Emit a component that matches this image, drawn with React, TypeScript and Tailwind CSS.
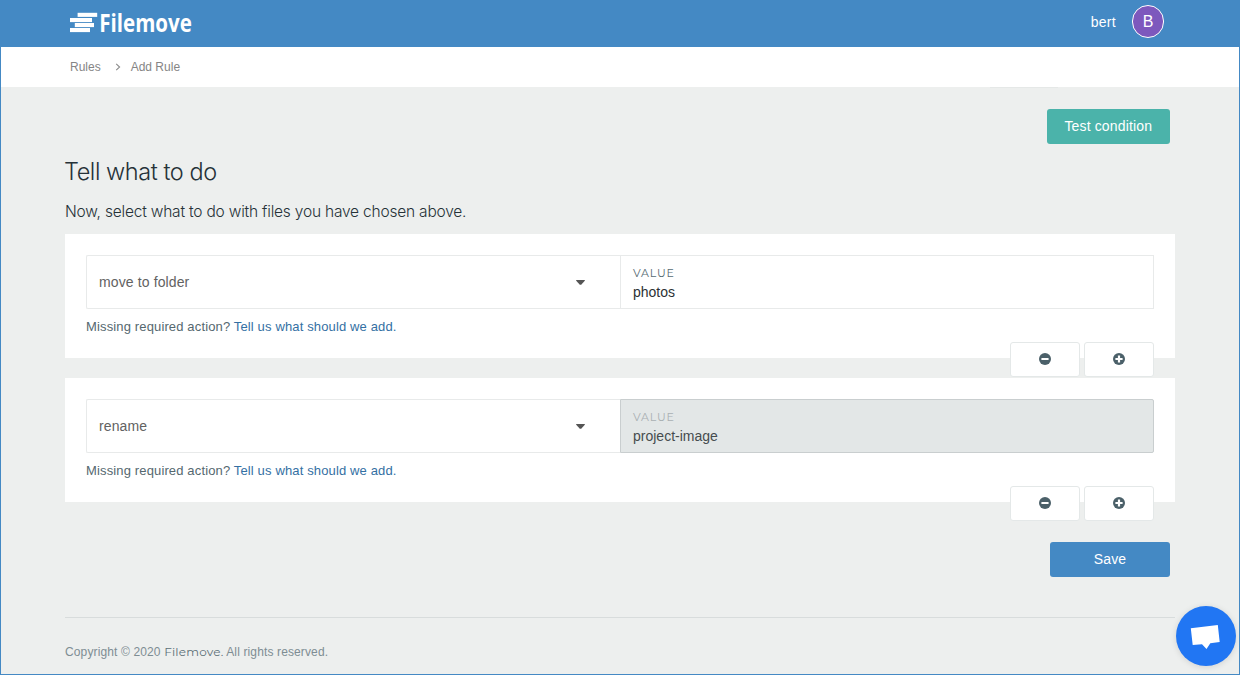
import React from 'react';

function Logo() {
  return (
    <svg width="140" height="47" viewBox="0 -10 140 47" className="block overflow-visible" fill="#fff" aria-label="Filemove">
      <rect x="7.6" y="2.8" width="19.6" height="4.1" />
      <rect x="0" y="8" width="22" height="4.1" />
      <rect x="4.8" y="13" width="19.2" height="4.1" />
      <rect x="0" y="18" width="20" height="4.1" />
      <text
        x="29.3"
        y="22"
        fontFamily="'Open Sans', sans-serif"
        fontWeight="700"
        fontSize="25"
        textLength="92.5"
        lengthAdjust="spacingAndGlyphs"
      >
        Filemove
      </text>
    </svg>
  );
}

function MinusCircle() {
  return (
    <svg width="12" height="12" viewBox="0 0 12 12">
      <circle cx="6" cy="6" r="6" fill="#4b6069" />
      <rect x="2.4" y="4.9" width="7.2" height="2.2" rx="0.3" fill="#fff" />
    </svg>
  );
}

function PlusCircle() {
  return (
    <svg width="12" height="12" viewBox="0 0 12 12">
      <circle cx="6" cy="6" r="6" fill="#4b6069" />
      <path d="M4.9 2.4h2.2v2.5h2.5v2.2H7.1v2.5H4.9V7.1H2.4V4.9h2.5z" fill="#fff" />
    </svg>
  );
}

function ActionButton({ children, label }: { children: React.ReactNode; label: string }) {
  return (
    <button
      aria-label={label}
      className="flex h-[35px] w-[70px] items-center justify-center rounded-[3px] border border-[#e4e8e8] bg-white pb-[2px]"
    >
      {children}
    </button>
  );
}

function RuleCard({ action, value, disabled = false }: { action: string; value: string; disabled?: boolean }) {
  return (
    <section className="relative h-[124px] bg-white px-[21px] pt-[21px]">
      <div className="flex h-[54px]">
        <div className="flex w-[534px] items-center justify-between rounded-l-[2px] border border-r-0 border-[#e8eaea] pl-3 pr-[35px]">
          <span className="text-[14px] tracking-[0.12px] text-[#626262]">{action}</span>
          <svg width="9" height="5" viewBox="0 0 9 5">
            <path d="M0.2 0h8.6v0.8L5.2 4.8H3.8L0.2 0.8z" fill="#555" />
          </svg>
        </div>
        <div
          className={
            disabled
              ? 'flex-1 rounded-r-[2px] border border-[#c9cecf] bg-[#e3e7e7] pl-3 pt-[9px]'
              : 'flex-1 border border-[#e8eaea] bg-white pl-3 pt-[9px]'
          }
        >
          <div
            className={
              disabled
                ? "font-['Montserrat','Inter',sans-serif] text-[11px] leading-4 tracking-[0.8px] text-[#a9b0b3]"
                : "font-['Montserrat','Inter',sans-serif] text-[11px] leading-4 tracking-[0.8px] text-[#566b73]"
            }
          >
            VALUE
          </div>
          <div className={disabled ? 'text-[14px] leading-[22px] text-[#464c4e]' : 'text-[14px] leading-[22px] text-[#2b3134]'}>
            {value}
          </div>
        </div>
      </div>
      <p className="mt-[9px] text-[13px] leading-[18px] tracking-[0.14px] text-[#55686f]">
        Missing required action?{' '}
        <a href="#" className="text-[#3470a3]">
          Tell us what should we add.
        </a>
      </p>
      <div className="absolute right-[21px] top-[108px] z-10 flex gap-1">
        <ActionButton label="Remove action">
          <MinusCircle />
        </ActionButton>
        <ActionButton label="Add action">
          <PlusCircle />
        </ActionButton>
      </div>
    </section>
  );
}

export default function App() {
  return (
    <div className="relative flex h-[675px] w-[1240px] flex-col overflow-hidden border border-t-0 border-[#4489c4] bg-[#edefee] font-['Liberation_Sans',Arial,sans-serif]">
      <header className="flex h-[47px] shrink-0 items-start justify-between bg-[#4489c4] pl-[69px] pr-[75px]">
        <Logo />
        <div className="flex items-center gap-4 pt-[5px] text-white">
          <span className="pt-[2px] text-[14px] tracking-[0.3px]">bert</span>
          <span className="flex h-[33px] w-8 items-center justify-center rounded-full border border-white bg-[#7d58bd] pt-px text-[16px]">
            B
          </span>
        </div>
      </header>
      <nav className="flex h-10 shrink-0 items-center bg-white pl-[69px] text-[12px] text-[#858585]">
        <span>Rules</span>
        <svg width="6" height="8" viewBox="0 0 6 8" className="ml-[14px] mr-[10px]" fill="none" stroke="#8c8c8c" strokeWidth="1.1">
          <path d="M1.2 0.8 4.6 4 1.2 7.2" />
        </svg>
        <span>Add Rule</span>
      </nav>
      <main className="flex-1 px-16">
        <div className="mr-[117px] ml-auto h-px w-[68px] bg-[#e5e8e7]" />
        <div className="flex justify-end pr-[5px] pt-[21px]">
          <button className="h-[35px] w-[123.5px] rounded-[3px] bg-[#4bb3aa] text-[14px] tracking-[0.15px] text-white">
            Test condition
          </button>
        </div>
        <h1 className="-ml-px mt-3 font-['Inter',sans-serif] text-[23.5px] font-light leading-8 tracking-[-0.44px] text-[#263238]">
          Tell what to do
        </h1>
        <p className="mt-3 font-['Inter',sans-serif] text-[15.5px] font-light leading-6 tracking-[-0.2px] text-[#263238]">
          Now, select what to do with files you have chosen above.
        </p>
        <div className="mt-[10px] flex flex-col gap-5">
          <RuleCard action="move to folder" value="photos" />
          <RuleCard action="rename" value="project-image" disabled />
        </div>
        <div className="flex justify-end pr-[5px] pt-10">
          <button className="h-[35px] w-[120px] rounded-[3px] bg-[#4489c4] text-[14px] tracking-[0.2px] text-white">Save</button>
        </div>
        <footer className="mt-10 border-t border-[#d8dcdc] pt-[25px] text-[12px] leading-[18px] tracking-[0.13px] text-[#7e8d93]">
          Copyright © 2020{' '}
          <span className="font-['Montserrat','Inter',sans-serif] tracking-[0.2px] text-[#5c6f77]">Filemove.</span> All rights reserved.
        </footer>
      </main>
      <button
        aria-label="Open chat"
        className="absolute bottom-2 right-[3px] flex size-[60px] items-center justify-center rounded-full bg-[#2176f3] shadow-[0_1px_6px_rgba(0,0,0,0.12)]"
      >
        <svg width="60" height="60" viewBox="0 0 60 60" fill="#fff">
          <path d="M14.8 22.2 41.8 19 43.7 36 34.3 37.3 30.5 43 26 38.3 16.7 39z" />
        </svg>
      </button>
    </div>
  );
}
